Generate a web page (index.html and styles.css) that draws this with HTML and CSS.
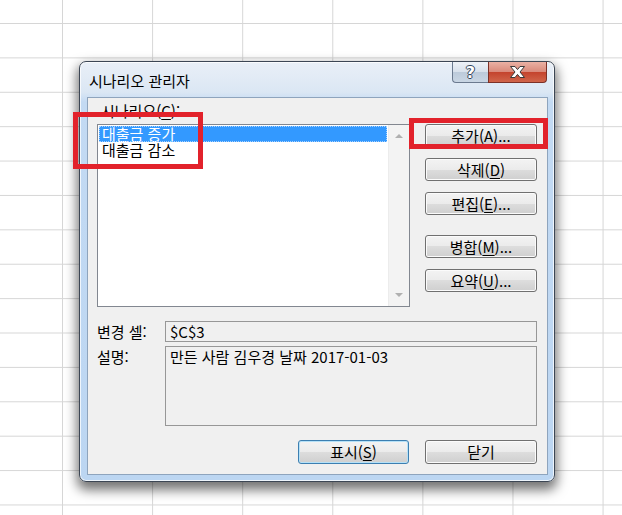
FILE: index.html
```html
<!DOCTYPE html>
<html lang="ko">
<head>
  <meta charset="UTF-8">
  <title>시나리오 관리자</title>
  <link rel="stylesheet" href="styles.css">
</head>
<body>
  <div class="dialog">
    <div class="titlebar">
      <span class="title">시나리오 관리자</span>
      <div class="capBtns">
        <span class="cap help">?</span>
        <span class="cap close">
          <svg width="17" height="12" viewBox="0 0 17 12"><path d="M1.5 0.5 H6 L8.5 3.6 L11 0.5 H15.5 L11 6 L15.5 11.5 H11 L8.5 8.4 L6 11.5 H1.5 L6 6 Z" fill="#fff" stroke="#3a3a3a" stroke-width="1" stroke-linejoin="round"/></svg>
        </span>
      </div>
    </div>

    <div class="client">
      <div class="top">
        <div class="scenarios">
          <div class="label">시나리오(<u>C</u>):</div>
          <div class="listbox">
            <ul class="items">
              <li class="sel">대출금 증가</li>
              <li>대출금 감소</li>
            </ul>
            <div class="vscroll">
              <span class="arrow up"></span>
              <span class="arrow down"></span>
            </div>
          </div>
        </div>
        <div class="actions">
          <button>추가(<u>A</u>)...</button>
          <button>삭제(<u>D</u>)</button>
          <button>편집(<u>E</u>)...</button>
          <button class="sep">병합(<u>M</u>)...</button>
          <button>요약(<u>U</u>)...</button>
        </div>
      </div>

      <div class="info">
        <div class="row">
          <span class="lbl">변경 셀:</span>
          <div class="field">$C$3</div>
        </div>
        <div class="row">
          <span class="lbl">설명:</span>
          <div class="field memo">만든 사람 김우경 날짜 2017-01-03</div>
        </div>
      </div>

      <div class="footer">
        <button class="default">표시(<u>S</u>)</button>
        <button>닫기</button>
      </div>
    </div>
  </div>

  <div class="mark markList"></div>
  <div class="mark markAdd"></div>
</body>
</html>
```

FILE: styles.css
```css
html { height:100%; background-color:#fff; background-image:linear-gradient(to right, #d6d6d6 1px, transparent 1px), linear-gradient(to bottom, #d6d6d6 1px, transparent 1px); background-size:90.1px 34.4px, 90.1px 34.4px; background-position:62px 0, 0 23px; }
body { margin:0; height:100%; display:flow-root; font-family:"Noto Sans CJK KR", "Noto Sans", sans-serif; font-size:15px; color:#000; overflow:hidden; }
u { text-decoration-thickness:1px; text-underline-offset:2px; }

.dialog { box-sizing:border-box; width:476px; height:421px; margin:61px 0 0 79px; padding:0 6px 6px 7px; border:1px solid #3c4654; border-radius:7px; background:linear-gradient(#e9eff7 0, #dbe7f4 30px, #c3daf3 40px, #bcd6f2 100%); box-shadow:inset 0 0 0 1px rgba(255,255,255,0.75), 0 6px 12px 2px rgba(0,0,0,0.55); }

.titlebar { display:flex; align-items:flex-start; height:35px; }
.title { margin:11px 0 0 2px; line-height:16px; }
.capBtns { margin:0 1px 0 auto; display:flex; height:21px; }
.cap { box-sizing:border-box; height:21px; display:flex; align-items:center; justify-content:center; border:1px solid #6b7a8f; border-top:none; }
.help { width:36px; border-radius:0 0 0 4px; border-right:none; background:linear-gradient(#eef2f7 0, #d7e0eb 50%, #bccada 51%, #c9d6e4 100%); color:#fff; font:bold 16px "DejaVu Sans", sans-serif; text-shadow:1px 0 #34445a, -1px 0 #34445a, 0 1px #34445a, 0 -1px #34445a; }
.close { width:59px; border-color:#7c3026; border-radius:0 0 4px 0; background:linear-gradient(#eab1a4 0, #d9897a 50%, #c4432d 51%, #d0654a 100%); }

.client { box-sizing:border-box; height:378px; padding:5px 10px 10px 9px; border:1px solid #8ea4bd; background:#f0f0f0; }
.top { display:flex; }
.scenarios { width:313px; }
.label { height:21px; line-height:16px; padding-left:4px; }
.listbox { box-sizing:border-box; height:183px; display:flex; border:1px solid #828790; background:#fff; }
.items { flex:1; list-style:none; margin:0; padding:1px 1px 0 1px; }
.items li { box-sizing:border-box; height:16px; line-height:16px; padding-left:3px; }
.items li.sel { background:#3399ff; color:#fff; outline:1px dotted #a8d2ff; outline-offset:-1px; }
.vscroll { width:20px; background:#f3f3f3; border-left:1px solid #ececec; display:flex; flex-direction:column; justify-content:space-between; align-items:center; padding:9px 0; }
.arrow { width:0; height:0; border-left:4px solid transparent; border-right:4px solid transparent; }
.arrow.up { border-bottom:4px solid #b0b0b0; }
.arrow.down { border-top:4px solid #b0b0b0; }

button { box-sizing:border-box; font:inherit; color:#000; padding:0; width:112px; height:23px; line-height:20px; border:1px solid #707070; border-radius:3px; background:linear-gradient(#f3f3f3 0, #ebebeb 50%, #dddddd 50%, #cfcfcf 100%); box-shadow:inset 0 0 0 1px #fbfbfb; }
.actions { display:flex; flex-direction:column; gap:11px; margin-left:15px; padding-top:21px; }
.actions .sep { margin-top:9px; }

.info { margin-top:14px; }
.row { display:flex; }
.row + .row { margin-top:4px; }
.lbl { width:68px; line-height:17px; padding-top:2px; }
.field { box-sizing:border-box; width:372px; height:21px; padding:1px 4px; line-height:17px; border:1px solid #979797; background:#f0f0f0; }
.field.memo { height:80px; }

.footer { display:flex; justify-content:flex-end; gap:16px; margin-top:14px; }
.footer button { height:24px; }
.footer .default { width:111px; border-color:#3c7fb1; box-shadow:inset 0 0 0 1px #b6e1f7; }

.mark { position:absolute; box-sizing:border-box; border:5px solid #e2222b; }
.markList { left:73px; top:112px; width:130px; height:57px; }
.markAdd { left:409px; top:118px; width:139px; height:31px; }
```
